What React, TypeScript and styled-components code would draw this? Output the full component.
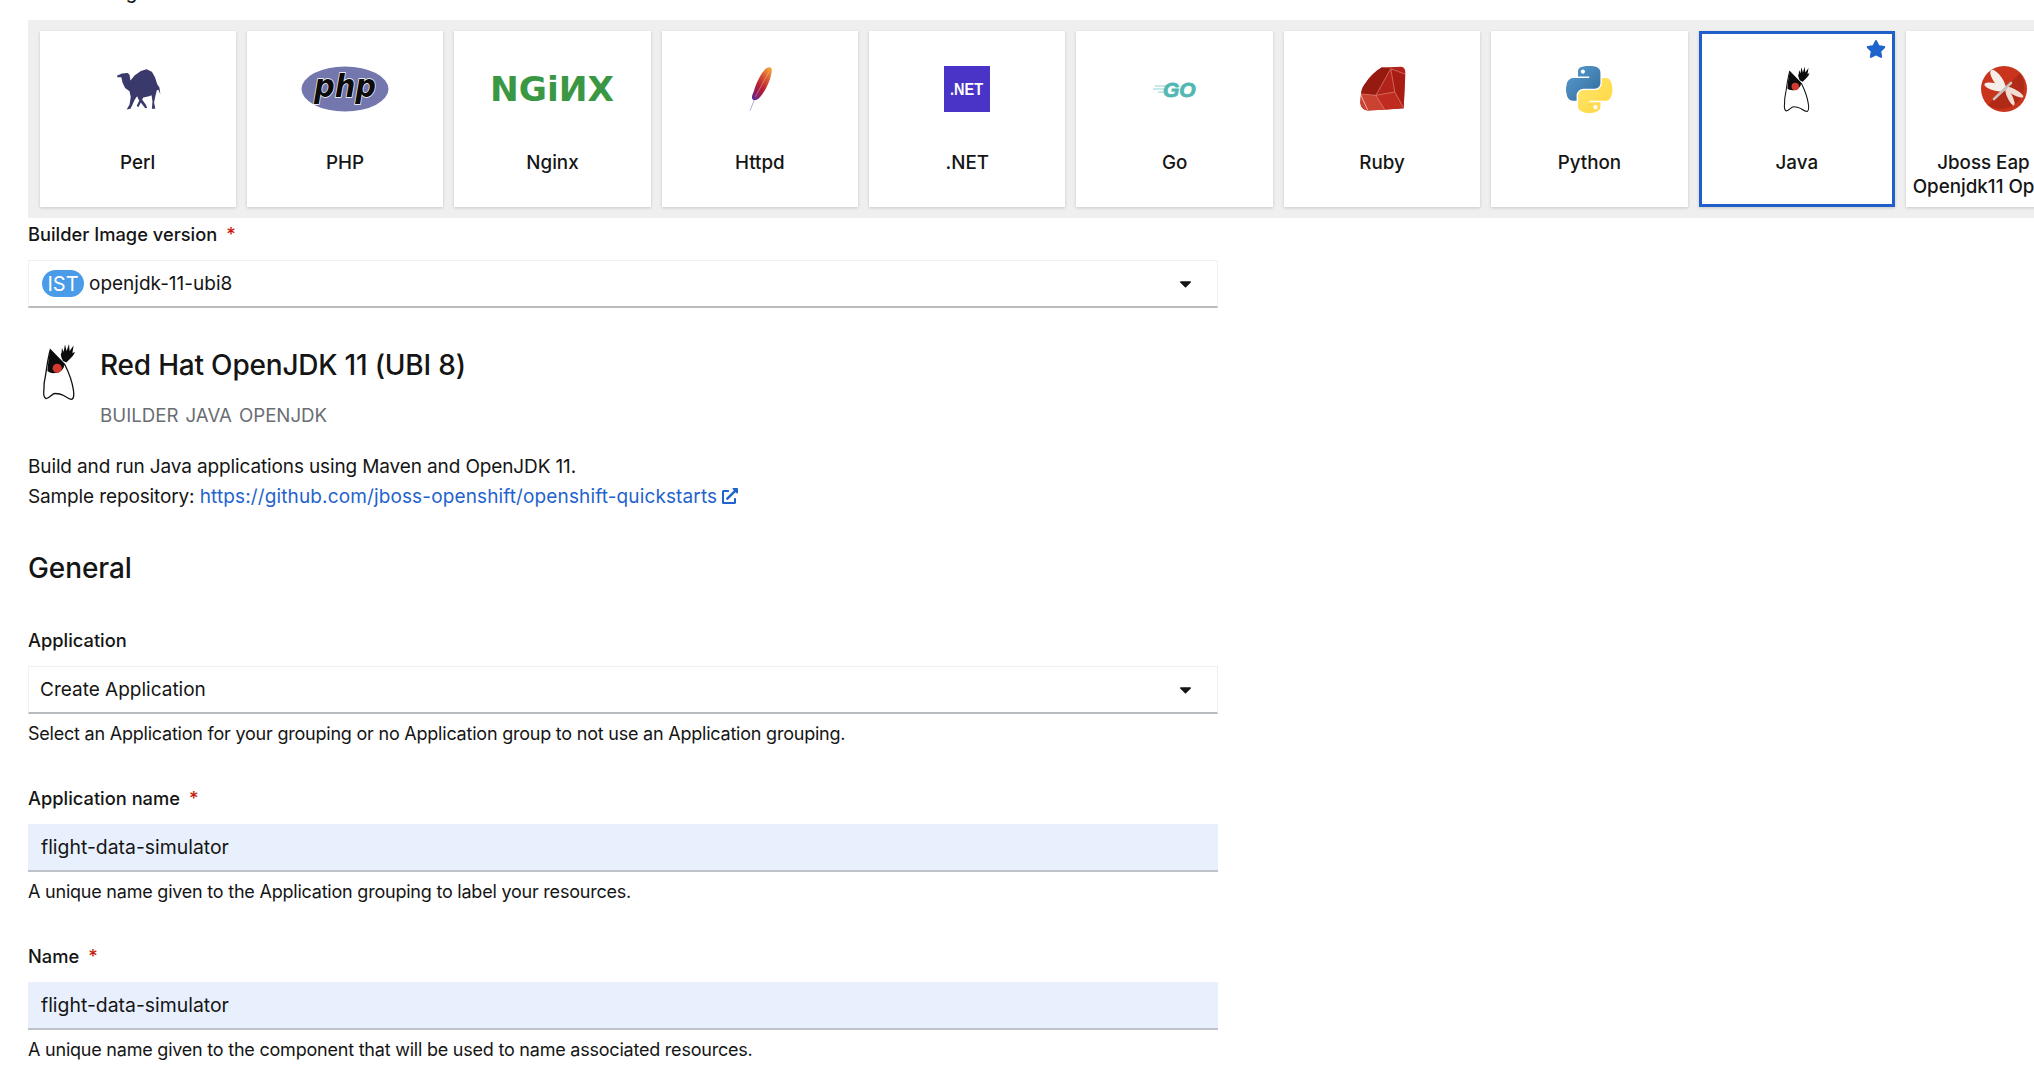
import styled, { createGlobalStyle } from "styled-components";
import { FaCaretDown, FaStar, FaExternalLinkAlt } from "react-icons/fa";

const GlobalStyle = createGlobalStyle`
  html, body {
    margin: 0;
    padding: 0;
    background: #fff;
    overflow: hidden;
  }
  body {
    font-family: "Inter", "Liberation Sans", sans-serif;
    font-size: 18px;
    color: #151515;
  }
`;

const Page = styled.div`
  width: 2034px;
  height: 1090px;
  overflow: hidden;
  padding-left: 28px;
  box-sizing: border-box;
`;

const CutLabel = styled.div`
  height: 24px;
  margin-top: -20px;
  margin-bottom: 16px;
  font-size: 18.3px;
  font-weight: 500;
  line-height: 24px;
`;

const Catalog = styled.div`
  display: flex;
  gap: 11px;
  background: #efefef;
  padding: 11px 0 11px 11.5px;
  height: 176px;
  width: 2100px;
`;

const Card = styled.div<{ $selected?: boolean }>`
  position: relative;
  flex: 0 0 196.4px;
  box-sizing: border-box;
  height: 176px;
  background: #fff;
  box-shadow: 0 1px 3px rgba(0, 0, 0, 0.16);
  border: ${(p) => (p.$selected ? "3px solid #1f5fc9" : "0 solid transparent")};
  padding-top: ${(p) => (p.$selected ? "32px" : "35px")};
  display: flex;
  flex-direction: column;
  align-items: center;
`;

const LogoBox = styled.div`
  height: 46px;
  display: flex;
  align-items: center;
  justify-content: center;
  svg {
    overflow: visible;
  }
`;

const CardName = styled.div`
  margin-top: 39px;
  padding: 0 4px;
  font-size: 18.8px;
  font-weight: 500;
  line-height: 24px;
  text-align: center;
`;

const Favorite = styled.span`
  position: absolute;
  top: 5px;
  right: 6px;
  color: #1f63cc;
  font-size: 20px;
  line-height: 20px;
`;

const Field = styled.div<{ $gap?: number }>`
  width: 1190px;
  margin-top: ${(p) => p.$gap ?? 0}px;
`;

const FieldLabel = styled.div`
  font-size: 18.3px;
  font-weight: 500;
  line-height: 24px;
  margin-bottom: 14px;
`;

const Required = styled.span`
  color: #c9190b;
  margin-left: 9px;
`;

const SelectBox = styled.div`
  height: 48px;
  box-sizing: border-box;
  border: 1px solid #f0f0f0;
  border-bottom: 2px solid #b8bbbe;
  padding: 0 22px 0 11px;
  display: flex;
  align-items: center;
  gap: 5px;
  font-size: 19px;
`;

const SelectValue = styled.span`
  flex: 1;
`;

const ImageBadge = styled.span`
  width: 42px;
  height: 27px;
  margin-left: 2px;
  border-radius: 14px;
  background: #4a9be8;
  color: #fff;
  font-size: 20px;
  display: flex;
  align-items: center;
  justify-content: center;
`;

const TextInput = styled.div`
  height: 48px;
  box-sizing: border-box;
  background: #e8f0fe;
  border-bottom: 2px solid #bfc3c9;
  padding-left: 13px;
  display: flex;
  align-items: center;
  font-size: 19.4px;
`;

const Helper = styled.div`
  margin-top: 8px;
  line-height: 24px;
  letter-spacing: -0.22px;
`;

const ImageHeader = styled.div`
  display: flex;
  gap: 24px;
  margin-top: 35px;
  padding-left: 14px;
`;

const ImageTitle = styled.div`
  font-size: 28px;
  font-weight: 500;
  line-height: 36px;
  margin-top: 4px;
  letter-spacing: -0.2px;
`;

const TagRow = styled.div`
  display: flex;
  gap: 7px;
  margin-top: 21px;
  color: #6a6e73;
  font-size: 18.7px;
  line-height: 24px;
`;

const Description = styled.p`
  margin: 24px 0 0;
  font-size: 19px;
  line-height: 30px;
  letter-spacing: -0.13px;
`;

const RepoLink = styled.a`
  color: #1f63cc;
  letter-spacing: 0.13px;
  svg {
    font-size: 16px;
    margin-left: 5px;
    vertical-align: -1px;
  }
`;

const SectionTitle = styled.h2`
  margin: 38px 0 42px;
  font-size: 28px;
  font-weight: 500;
  line-height: 36px;
  letter-spacing: -0.1px;
`;

const DukeLogo = ({ height }: { height: number }) => (
  <svg viewBox="0 0 34 57" height={height} width={(height * 34) / 57}>
    <path
      d="M8.3 6.7 C5 18 4.6 28 2.7 37 C1.6 41 2.4 44 1.7 49 C1.6 53 2.4 55 4 55.7 C8 55 10 50.5 13 50.5 C16 50.5 19 51 21.7 52.5 C24.5 54.2 27.5 56.6 30 56.3 C32.4 55 32 51 31.4 47 C30.4 40 28.5 33 23 22 Z"
      fill="#fff"
      stroke="#111"
      strokeWidth="1.3"
    />
    <path d="M8.3 6.7 L22.5 21 C22 26 19 29 14 30 C10 30.6 7 29.5 5.4 28 C6 20 7 13 8.3 6.7 Z" fill="#0c0c0c" />
    <circle cx="15.2" cy="25.3" r="4.6" fill="#d23a30" />
    <path
      d="M21 18 C19.5 15 18 11 19.5 10 L20 5 L21.6 9 L23 1.5 L24.6 8 L27 1 L27.6 8 L31.6 2.5 L30.4 10 L33 9 C31.5 13.5 27 16.5 24.5 19.5 Z"
      fill="#0c0c0c"
    />
  </svg>
);

const PerlLogo = () => (
  <svg viewBox="38 36 146 138" width="46" height="46">
    <path
      d="M44 63 L60 56 L78 54 L84 60 L87 78 L100 62 L120 48 L138 42 L155 50 L165 68 L172 90 L179 100 L182 122 L176 108 L171 108 L166 128 L162 148 L166 168 L155 168 L157 145 L154 125 L146 128 L128 132 L124 138 L136 155 L140 165 L134 166 L120 148 L112 163 L107 158 L115 142 L108 128 L100 140 L92 158 L87 168 L75 170 L84 155 L88 130 L84 112 L70 102 L62 85 L58 68 L46 68 Z"
      fill="#39396b"
    />
  </svg>
);

const PhpLogo = () => (
  <svg viewBox="0 0 88 46" width="88" height="46">
    <ellipse cx="44" cy="23" rx="43.5" ry="22.5" fill="#7377ad" />
    <text
      x="44"
      y="31"
      textAnchor="middle"
      fontFamily="DejaVu Sans, sans-serif"
      fontWeight="700"
      fontStyle="italic"
      fontSize="32"
      fill="#0b0b0b"
      stroke="#fff"
      strokeWidth="1.4"
      paintOrder="stroke"
      textLength="62"
      lengthAdjust="spacingAndGlyphs"
    >
      php
    </text>
  </svg>
);

const NginxLogo = () => (
  <svg viewBox="0 0 124 34" width="124" height="34">
    <text
      x="0"
      y="29"
      fontFamily="DejaVu Sans, sans-serif"
      fontWeight="700"
      fontSize="33"
      fill="#3a9845"
      textLength="124"
      lengthAdjust="spacingAndGlyphs"
    >
      NGiИX
    </text>
  </svg>
);

const ApacheLogo = () => (
  <svg viewBox="70 30 90 146" width="29" height="46">
    <defs>
      <linearGradient id="feather" x1="0.8" y1="0" x2="0.2" y2="1">
        <stop offset="0" stopColor="#f0a13a" />
        <stop offset="0.3" stopColor="#d9552f" />
        <stop offset="0.6" stopColor="#b81f33" />
        <stop offset="0.85" stopColor="#8d1c5e" />
        <stop offset="1" stopColor="#5c2a8c" />
      </linearGradient>
    </defs>
    <path d="M85 172 L102 128" stroke="#b9a2cf" strokeWidth="3" />
    <path
      d="M138 36 C150 30 157 36 153 52 C149 76 137 102 122 122 C114 134 104 142 94 137 C88 130 92 122 97 110 C105 84 120 50 138 36 Z"
      fill="url(#feather)"
    />
    <path d="M102 128 L145 48" stroke="#f5c9c0" strokeWidth="1.4" />
  </svg>
);

const DotNetLogo = () => (
  <svg viewBox="0 0 46 46" width="46" height="46">
    <rect width="46" height="46" fill="#4a34c8" />
    <text
      x="6"
      y="29"
      fontFamily="Liberation Sans, sans-serif"
      fontSize="17"
      fontWeight="700"
      fill="#fff"
      textLength="33"
      lengthAdjust="spacingAndGlyphs"
    >
      .NET
    </text>
  </svg>
);

const GoLogo = () => (
  <svg viewBox="0 0 46 24" width="46" height="24">
    <path d="M3 9 H14 M1 12 H12 M6 15 H12" stroke="#8fd2ce" strokeWidth="1" />
    <text
      x="11"
      y="20"
      fontFamily="Liberation Sans, sans-serif"
      fontWeight="700"
      fontStyle="italic"
      fontSize="21"
      fill="#50b7b1"
      stroke="#50b7b1"
      strokeWidth="0.8"
    >
      GO
    </text>
  </svg>
);

const RubyLogo = () => (
  <svg viewBox="52 34 142 138" width="47" height="46">
    <path d="M120 38 L180 36 Q194 38 192 60 L187 162 L78 168 Q58 165 56 145 C56 120 62 100 72 85 C84 66 100 50 120 38 Z" fill="#b1231a" />
    <path d="M120 38 L148 40 L103 122 L58 118 C60 100 66 92 72 85 C84 66 100 50 120 38 Z" fill="#971a10" />
    <path d="M148 42 L191 58 L187 162 L160 112 Z" fill="#a81d13" />
    <path d="M103 122 L160 112 L187 160 L130 166 Z" fill="#bf2c1f" />
    <path d="M58 118 L103 122 L130 166 L78 168 Q58 165 56 145 Z" fill="#c94232" />
    <path d="M58 118 L103 122 L148 42 M148 42 L160 112 L103 122 L130 166 M160 112 L187 160 M148 42 L191 58" stroke="#f0a090" strokeWidth="1.6" fill="none" />
    <path d="M57 120 L78 166" stroke="#f6d0c8" strokeWidth="2.4" />
  </svg>
);

const PythonLogo = () => (
  <svg viewBox="0 0 110 110" width="46" height="46">
    <defs>
      <linearGradient id="pyBlue" x1="0" y1="0" x2="1" y2="1">
        <stop offset="0" stopColor="#5a9fd4" />
        <stop offset="1" stopColor="#306998" />
      </linearGradient>
      <linearGradient id="pyYellow" x1="0" y1="0" x2="1" y2="1">
        <stop offset="0" stopColor="#ffe873" />
        <stop offset="1" stopColor="#ffd43b" />
      </linearGradient>
    </defs>
    <path
      d="M54.92 0.001c-4.584 0.022-8.961 0.413-12.813 1.095C30.76 3.099 28.7 7.295 28.7 15.032v10.219h26.813v3.406H18.638c-7.792 0-14.616 4.684-16.75 13.594-2.462 10.213-2.571 16.586 0 27.25 1.906 7.938 6.458 13.594 14.25 13.594h9.219v-12.25c0-8.85 7.657-16.656 16.75-16.656h26.781c7.455 0 13.406-6.138 13.406-13.625V15.032c0-7.266-6.13-12.725-13.406-13.937C64.282 0.328 59.502-0.02 54.92 0.001zM40.42 8.22c2.77 0 5.031 2.299 5.031 5.125 0 2.816-2.262 5.094-5.031 5.094-2.779 0-5.031-2.277-5.031-5.094 0-2.826 2.252-5.125 5.031-5.125z"
      fill="url(#pyBlue)"
    />
    <path
      d="M85.638 28.657v11.906c0 9.231-7.826 17-16.75 17H42.106c-7.336 0-13.406 6.278-13.406 13.625v25.531c0 7.266 6.319 11.54 13.406 13.625 8.487 2.496 16.626 2.947 26.781 0 6.75-1.954 13.406-5.888 13.406-13.625V86.501H55.513v-3.405h40.187c7.792 0 10.696-5.435 13.406-13.594 2.799-8.399 2.68-16.476 0-27.25-1.926-7.757-5.604-13.594-13.406-13.594zM70.575 93.313c2.779 0 5.031 2.277 5.031 5.094 0 2.826-2.252 5.125-5.031 5.125-2.77 0-5.031-2.299-5.031-5.125 0-2.816 2.262-5.094 5.031-5.094z"
      fill="url(#pyYellow)"
    />
  </svg>
);

const DragonflyLogo = () => (
  <svg viewBox="-23 -23 46 46" width="46" height="46">
    <circle r="23" fill="#c8341c" />
    <path d="M16 -16 A23 23 0 0 1 -16 16 Z" fill="#b02a17" />
    <ellipse cx="-6" cy="-9" rx="4.4" ry="12" transform="rotate(-35 -6 -9)" fill="#f6efe9" />
    <ellipse cx="-9" cy="-2" rx="3.6" ry="11" transform="rotate(-75 -9 -2)" fill="#f6efe9" />
    <ellipse cx="10" cy="3" rx="2.8" ry="10.5" transform="rotate(-62 10 3)" fill="#f1dcd3" />
    <ellipse cx="6" cy="8" rx="2.6" ry="9.5" transform="rotate(-25 6 8)" fill="#f1dcd3" />
    <path d="M-10 10 L7 -6" stroke="#c9c2bc" strokeWidth="2.6" strokeLinecap="round" />
  </svg>
);

const builders = [
  { name: "Perl", logo: <PerlLogo /> },
  { name: "PHP", logo: <PhpLogo /> },
  { name: "Nginx", logo: <NginxLogo /> },
  { name: "Httpd", logo: <ApacheLogo /> },
  { name: ".NET", logo: <DotNetLogo /> },
  { name: "Go", logo: <GoLogo /> },
  { name: "Ruby", logo: <RubyLogo /> },
  { name: "Python", logo: <PythonLogo /> },
  { name: "Java", logo: <DukeLogo height={46} />, selected: true },
  { name: "Jboss Eap Xp3 Openjdk11 Openshift", logo: <DragonflyLogo /> },
];

const App = () => {
  return (
    <Page>
      <GlobalStyle />
      <CutLabel>Builder Image</CutLabel>
      <Catalog>
        {builders.map((b) => (
          <Card key={b.name} $selected={b.selected}>
            {b.selected && (
              <Favorite>
                <FaStar />
              </Favorite>
            )}
            <LogoBox>{b.logo}</LogoBox>
            <CardName>{b.name}</CardName>
          </Card>
        ))}
      </Catalog>

      <Field $gap={4}>
        <FieldLabel>
          Builder Image version<Required>*</Required>
        </FieldLabel>
        <SelectBox>
          <ImageBadge>IST</ImageBadge>
          <SelectValue>openjdk-11-ubi8</SelectValue>
          <FaCaretDown />
        </SelectBox>
      </Field>

      <ImageHeader>
        <DukeLogo height={57} />
        <div>
          <ImageTitle>Red Hat OpenJDK 11 (UBI 8)</ImageTitle>
          <TagRow>
            <span>BUILDER</span>
            <span>JAVA</span>
            <span>OPENJDK</span>
          </TagRow>
        </div>
      </ImageHeader>

      <Description>
        Build and run Java applications using Maven and OpenJDK 11.
        <br />
        Sample repository:{" "}
        <RepoLink>
          https://github.com/jboss-openshift/openshift-quickstarts
          <FaExternalLinkAlt />
        </RepoLink>
      </Description>

      <SectionTitle>General</SectionTitle>

      <Field>
        <FieldLabel>Application</FieldLabel>
        <SelectBox>
          <SelectValue>Create Application</SelectValue>
          <FaCaretDown />
        </SelectBox>
        <Helper>Select an Application for your grouping or no Application group to not use an Application grouping.</Helper>
      </Field>

      <Field $gap={40}>
        <FieldLabel>
          Application name<Required>*</Required>
        </FieldLabel>
        <TextInput>flight-data-simulator</TextInput>
        <Helper>A unique name given to the Application grouping to label your resources.</Helper>
      </Field>

      <Field $gap={40}>
        <FieldLabel>
          Name<Required>*</Required>
        </FieldLabel>
        <TextInput>flight-data-simulator</TextInput>
        <Helper>A unique name given to the component that will be used to name associated resources.</Helper>
      </Field>
    </Page>
  );
};

export default App;
